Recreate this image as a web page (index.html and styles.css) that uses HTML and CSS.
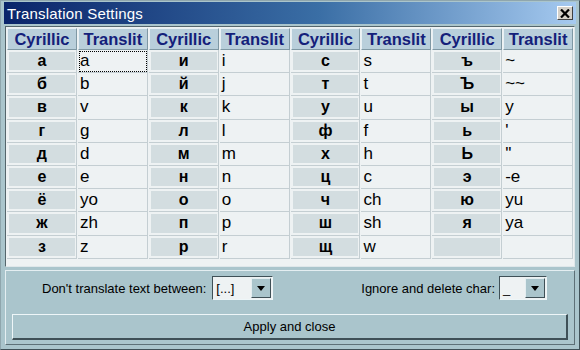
FILE: index.html
```html
<!DOCTYPE html>
<html lang="en">
  <head>
    <meta charset="UTF-8" />
    <title>Translation Settings</title>
    <link rel="stylesheet" href="styles.css">
  </head>
  <body>
    <div class="window">
      <div class="titlebar">
        <span class="titlebar__text">Translation Settings</span>
        <button class="titlebar__close" type="button">
          <svg width="10" height="9" viewBox="0 0 10 9">
            <path d="M1 0.5 L9 8.5 M9 0.5 L1 8.5" stroke="#000" stroke-width="2.2" />
          </svg>
        </button>
      </div>

      <div class="table">
        <div class="table__grid">
          <div class="head">Cyrillic</div><div class="head">Translit</div>
          <div class="head">Cyrillic</div><div class="head">Translit</div>
          <div class="head">Cyrillic</div><div class="head">Translit</div>
          <div class="head">Cyrillic</div><div class="head">Translit</div>

          <div class="cyr"><span>а</span></div><div class="lat lat--focus">a</div>
          <div class="cyr"><span>и</span></div><div class="lat">i</div>
          <div class="cyr"><span>с</span></div><div class="lat">s</div>
          <div class="cyr"><span>ъ</span></div><div class="lat">~</div>

          <div class="cyr"><span>б</span></div><div class="lat">b</div>
          <div class="cyr"><span>й</span></div><div class="lat">j</div>
          <div class="cyr"><span>т</span></div><div class="lat">t</div>
          <div class="cyr"><span>Ъ</span></div><div class="lat">~~</div>

          <div class="cyr"><span>в</span></div><div class="lat">v</div>
          <div class="cyr"><span>к</span></div><div class="lat">k</div>
          <div class="cyr"><span>у</span></div><div class="lat">u</div>
          <div class="cyr"><span>ы</span></div><div class="lat">y</div>

          <div class="cyr"><span>г</span></div><div class="lat">g</div>
          <div class="cyr"><span>л</span></div><div class="lat">l</div>
          <div class="cyr"><span>ф</span></div><div class="lat">f</div>
          <div class="cyr"><span>ь</span></div><div class="lat">'</div>

          <div class="cyr"><span>д</span></div><div class="lat">d</div>
          <div class="cyr"><span>м</span></div><div class="lat">m</div>
          <div class="cyr"><span>х</span></div><div class="lat">h</div>
          <div class="cyr"><span>Ь</span></div><div class="lat">''</div>

          <div class="cyr"><span>е</span></div><div class="lat">e</div>
          <div class="cyr"><span>н</span></div><div class="lat">n</div>
          <div class="cyr"><span>ц</span></div><div class="lat">c</div>
          <div class="cyr"><span>э</span></div><div class="lat">-e</div>

          <div class="cyr"><span>ё</span></div><div class="lat">yo</div>
          <div class="cyr"><span>о</span></div><div class="lat">o</div>
          <div class="cyr"><span>ч</span></div><div class="lat">ch</div>
          <div class="cyr"><span>ю</span></div><div class="lat">yu</div>

          <div class="cyr"><span>ж</span></div><div class="lat">zh</div>
          <div class="cyr"><span>п</span></div><div class="lat">p</div>
          <div class="cyr"><span>ш</span></div><div class="lat">sh</div>
          <div class="cyr"><span>я</span></div><div class="lat">ya</div>

          <div class="cyr"><span>з</span></div><div class="lat">z</div>
          <div class="cyr"><span>р</span></div><div class="lat">r</div>
          <div class="cyr"><span>щ</span></div><div class="lat">w</div>
          <div class="cyr"><span></span></div><div class="lat"></div>
        </div>
      </div>

      <div class="options">
        <div class="options__row">
          <label class="options__label">Don't translate text between:</label>
          <div class="combo combo--wide">
            <span class="combo__value">[...]</span>
            <span class="combo__btn"></span>
          </div>
          <label class="options__label options__label--right">Ignore and delete char:</label>
          <div class="combo combo--narrow">
            <span class="combo__value">_</span>
            <span class="combo__btn"></span>
          </div>
        </div>
        <button class="apply" type="button">Apply and close</button>
      </div>
    </div>
  </body>
</html>
```

FILE: styles.css
```css
* {
  box-sizing: border-box;
}

body {
  margin: 0;
  background-color: #a9c3cb;
  font-family: "Liberation Sans", Arial, sans-serif;
}

.window {
  width: 580px;
  height: 350px;
  display: flex;
  flex-direction: column;
  background-color: #aac5cc;
  border: 1px solid #8fa6ad;
  border-right-color: #3f5057;
  border-bottom-color: #3f5057;
  padding: 1px 3px 4px 3px;
}

.titlebar {
  height: 22px;
  display: flex;
  align-items: center;
  justify-content: space-between;
  padding: 0 3px 0 3px;
  background: linear-gradient(to right, #0a246a 0%, #3a6ea5 55%, #a6caf0 100%);
}

.titlebar__text {
  color: #ffffff;
  font-size: 15px;
  letter-spacing: 0.2px;
}

.titlebar__close {
  width: 16px;
  height: 14px;
  padding: 0;
  display: flex;
  align-items: center;
  justify-content: center;
  background-color: #d4d0c8;
  border: 1px solid #ffffff;
  border-right-color: #404040;
  border-bottom-color: #404040;
}

.table {
  margin: 2px 1px 0 1px;
  height: 241px;
  background-color: #eef2f3;
  border: 1px solid #55666c;
  border-right-color: #dfe7ea;
  border-bottom-color: #dfe7ea;
  padding: 1px 1px 0 1px;
}

.table__grid {
  display: grid;
  grid-template-columns: repeat(8, 1fr);
  grid-template-rows: 22px repeat(9, 23.2px);
  column-gap: 1px;
  background-color: #eef2f3;
}

.head {
  display: flex;
  align-items: center;
  justify-content: center;
  background-color: #b9cfdb;
  color: #14207a;
  font-weight: bold;
  font-size: 16.5px;
  border: 1px solid #e8f0f4;
  border-right-color: #7f98a4;
  border-bottom-color: #7f98a4;
}

.cyr {
  padding: 2px 1px 2px 2px;
  border-bottom: 1px solid #c4ced2;
  border-right: 1px solid #c4ced2;
}

.cyr span {
  display: flex;
  height: 100%;
  align-items: center;
  justify-content: center;
  background-color: #d3dde0;
  font-weight: bold;
  font-size: 16px;
  color: #000000;
}

.lat {
  display: flex;
  align-items: center;
  padding-left: 2px;
  font-size: 17px;
  color: #000000;
  border-bottom: 1px solid #c4ced2;
  border-right: 1px solid #c4ced2;
}

.lat--focus {
  outline: 1px dotted #000000;
  outline-offset: -2px;
}

.options {
  flex: 1;
  margin: 3px 1px 0 1px;
  border: 1px solid #e4eef1;
  border-right-color: #5d7077;
  border-bottom-color: #5d7077;
  padding: 5px 6px 0 6px;
}

.options__row {
  display: flex;
  align-items: center;
  height: 24px;
}

.options__label {
  font-size: 13px;
  color: #000000;
  margin-left: 30px;
  margin-right: 6px;
}

.options__label--right {
  margin-left: auto;
  margin-right: 4px;
}

.combo {
  height: 24px;
  display: flex;
  background-color: #eef2f3;
  border: 1px solid #3f5057;
  border-right-color: #eef6f8;
  border-bottom-color: #eef6f8;
  padding: 1px;
}

.combo--wide {
  width: 61px;
}

.combo--narrow {
  width: 48px;
  margin-right: 21px;
}

.combo__value {
  flex: 1;
  font-size: 13px;
  padding-left: 2px;
  display: flex;
  align-items: center;
}

.combo__btn {
  width: 20px;
  background-color: #aac5cc;
  border: 1px solid #e4eef1;
  border-right-color: #3f5057;
  border-bottom-color: #3f5057;
  position: relative;
}

.combo__btn::after {
  content: "";
  position: absolute;
  left: 5px;
  top: 7px;
  border-left: 4px solid transparent;
  border-right: 4px solid transparent;
  border-top: 5px solid #000000;
}

.apply {
  display: block;
  width: 556px;
  height: 26px;
  margin-top: 14px;
  font-family: "Liberation Sans", Arial, sans-serif;
  font-size: 13px;
  color: #000000;
  background-color: #aac5cc;
  border: 1px solid #eef6f8;
  border-right: 2px solid #3f5057;
  border-bottom: 2px solid #3f5057;
}
```
